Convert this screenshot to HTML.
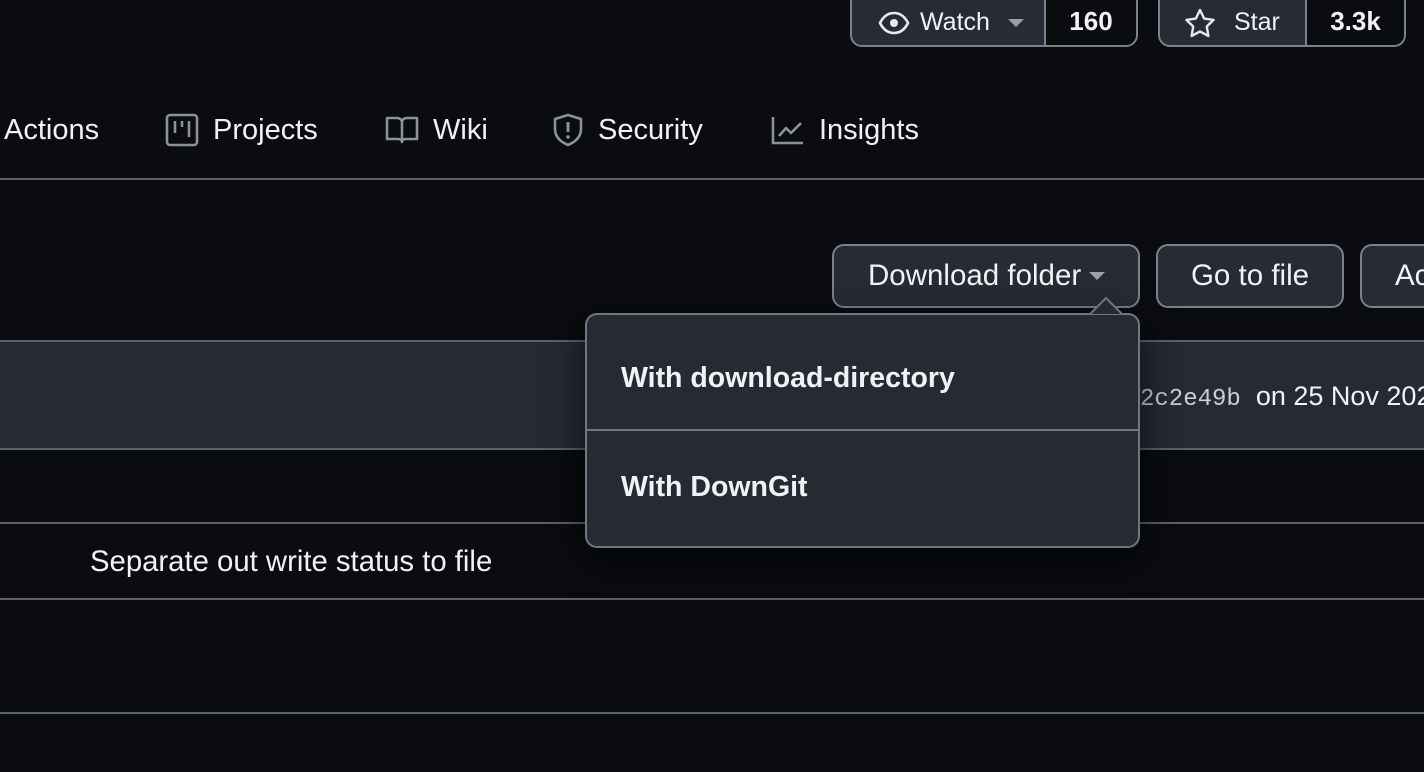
<!DOCTYPE html>
<html><head><style>
*{box-sizing:border-box;margin:0;padding:0}
body{width:1424px;height:772px;overflow:hidden;background:#0a0c10;font-family:"Liberation Sans",sans-serif;color:#f0f3f6;position:relative}
.abs{position:absolute}
.btn{position:absolute;border:2px solid #7a828e;border-radius:12px;background:#272b33;display:flex;align-items:center}
.t{font-size:26px;font-weight:600}
.line{position:absolute;left:0;width:1424px;height:2px;background:#5b626c}
.nav{position:absolute;top:113px;font-size:29px;display:flex;align-items:center;gap:14px;color:#f0f3f6;height:34px}
svg{display:block}
</style></head><body>
<div class="btn" style="left:850px;top:-12px;width:288px;height:59px">
 <div style="width:192px;height:100%;display:flex;align-items:center;padding-left:26px;gap:10px;padding-top:10px">
  <svg width="32" height="24" viewBox="0 0 32 24"><path d="M2 12C6 4 11 2 16 2s10 2 14 10c-4 8-9 10-14 10S6 20 2 12z" fill="none" stroke="#e6e9ee" stroke-width="2.6"/><circle cx="16" cy="12" r="4" fill="#e6e9ee"/></svg>
  <span class="t" style="font-weight:500;font-size:25px">Watch</span>
  <svg width="16" height="10" style="margin-left:8px"><path d="M0 1h16L8 9z" fill="#9aa1ab"/></svg>
 </div>
 <div style="width:2px;height:100%;background:#7a828e"></div>
 <div style="flex:1;height:100%;background:#0a0c10;border-radius:0 10px 10px 0;display:flex;align-items:center;justify-content:center;padding-top:8px" class="t">160</div>
</div>
<div class="btn" style="left:1158px;top:-12px;width:248px;height:59px">
 <div style="width:145px;height:100%;display:flex;align-items:center;padding-left:24px;gap:18px;padding-top:10px">
  <svg width="32" height="30" viewBox="0 0 32 30"><path d="M16 2l4.2 8.6 9.4 1.3-6.8 6.6 1.6 9.4L16 23.5l-8.4 4.4 1.6-9.4-6.8-6.6 9.4-1.3z" fill="none" stroke="#e6e9ee" stroke-width="2.4" stroke-linejoin="round"/></svg>
  <span class="t" style="font-weight:500;font-size:25px">Star</span>
 </div>
 <div style="width:2px;height:100%;background:#7a828e"></div>
 <div style="flex:1;height:100%;background:#0a0c10;border-radius:0 10px 10px 0;display:flex;align-items:center;justify-content:center;padding-top:8px" class="t">3.3k</div>
</div>
<div class="nav" style="left:4px">Actions</div>
<div class="nav" style="left:165px"><svg width="34" height="34" viewBox="0 0 34 34"><rect x="2" y="2" width="30" height="30" rx="3" fill="none" stroke="#8b929c" stroke-width="2.6"/><path d="M10 8v12M17 8v6M24 8v16" stroke="#8b929c" stroke-width="2.6"/></svg>Projects</div>
<div class="nav" style="left:385px"><svg width="34" height="30" viewBox="0 0 34 30"><path d="M2 3h10c3 0 5 2 5 4v20c0-2-2-3-4-3H2zM32 3H22c-3 0-5 2-5 4v20c0-2 2-3 4-3h11z" fill="none" stroke="#8b929c" stroke-width="2.6" stroke-linejoin="round"/></svg>Wiki</div>
<div class="nav" style="left:552px"><svg width="32" height="34" viewBox="0 0 32 34"><path d="M16 2L3 6v10c0 8 6 13 13 16 7-3 13-8 13-16V6z" fill="none" stroke="#8b929c" stroke-width="2.6" stroke-linejoin="round"/><path d="M16 9v10" stroke="#8b929c" stroke-width="3"/><circle cx="16" cy="24" r="1.8" fill="#8b929c"/></svg>Security</div>
<div class="nav" style="left:771px"><svg width="34" height="30" viewBox="0 0 34 30"><path d="M2 2v26h30" fill="none" stroke="#8b929c" stroke-width="2.6"/><path d="M8 21l7-8 5 5 10-10" fill="none" stroke="#8b929c" stroke-width="2.6" stroke-linejoin="round"/></svg>Insights</div>
<div class="line" style="top:178px"></div>
<div class="btn" style="left:832px;top:244px;width:308px;height:64px;padding-left:34px;gap:8px"><span class="t" style="font-weight:500;font-size:29.5px">Download folder</span><svg width="16" height="10"><path d="M0 1h16L8 9z" fill="#9aa1ab"/></svg></div>
<div class="btn" style="left:1156px;top:244px;width:188px;height:64px;justify-content:center"><span class="t" style="font-weight:500;font-size:29.5px">Go to file</span></div>
<div class="btn" style="left:1360px;top:244px;width:120px;height:64px;padding-left:33px"><span class="t" style="font-weight:500;font-size:29.5px">Ac</span></div>
<div class="abs" style="left:0;top:340px;width:1424px;height:110px;background:#262a32;border-top:2px solid #5b626c;border-bottom:2px solid #5b626c"></div>
<div class="abs" style="left:1140px;top:381px;font-size:27px;white-space:nowrap"><span style="font-family:'Liberation Mono',monospace;font-size:24px;color:#c9cfd6">2c2e49b</span>&nbsp; on 25 Nov 2022</div>
<div class="line" style="top:522px"></div>
<div class="abs" style="left:90px;top:545px;font-size:29.3px">Separate out write status to file</div>
<div class="line" style="top:598px"></div>
<div class="line" style="top:712px"></div>
<div class="abs" style="left:585px;top:313px;width:555px;height:235px;background:#262a32;border:2px solid #6e7681;border-radius:12px;box-shadow:0 12px 40px rgba(0,0,0,.7)">
 <div style="height:116px;border-bottom:2px solid #6e7681;display:flex;align-items:center;padding-left:34px;padding-top:12px;font-size:28.5px" class="t">With download-directory</div>
 <div style="height:113px;display:flex;align-items:center;padding-left:34px;font-size:28.5px" class="t">With DownGit</div>
</div>
<svg class="abs" style="left:1090px;top:297px" width="32" height="18"><path d="M0 17L16 1l16 16" fill="#262a32" stroke="#6e7681" stroke-width="2"/></svg>
</body></html>
